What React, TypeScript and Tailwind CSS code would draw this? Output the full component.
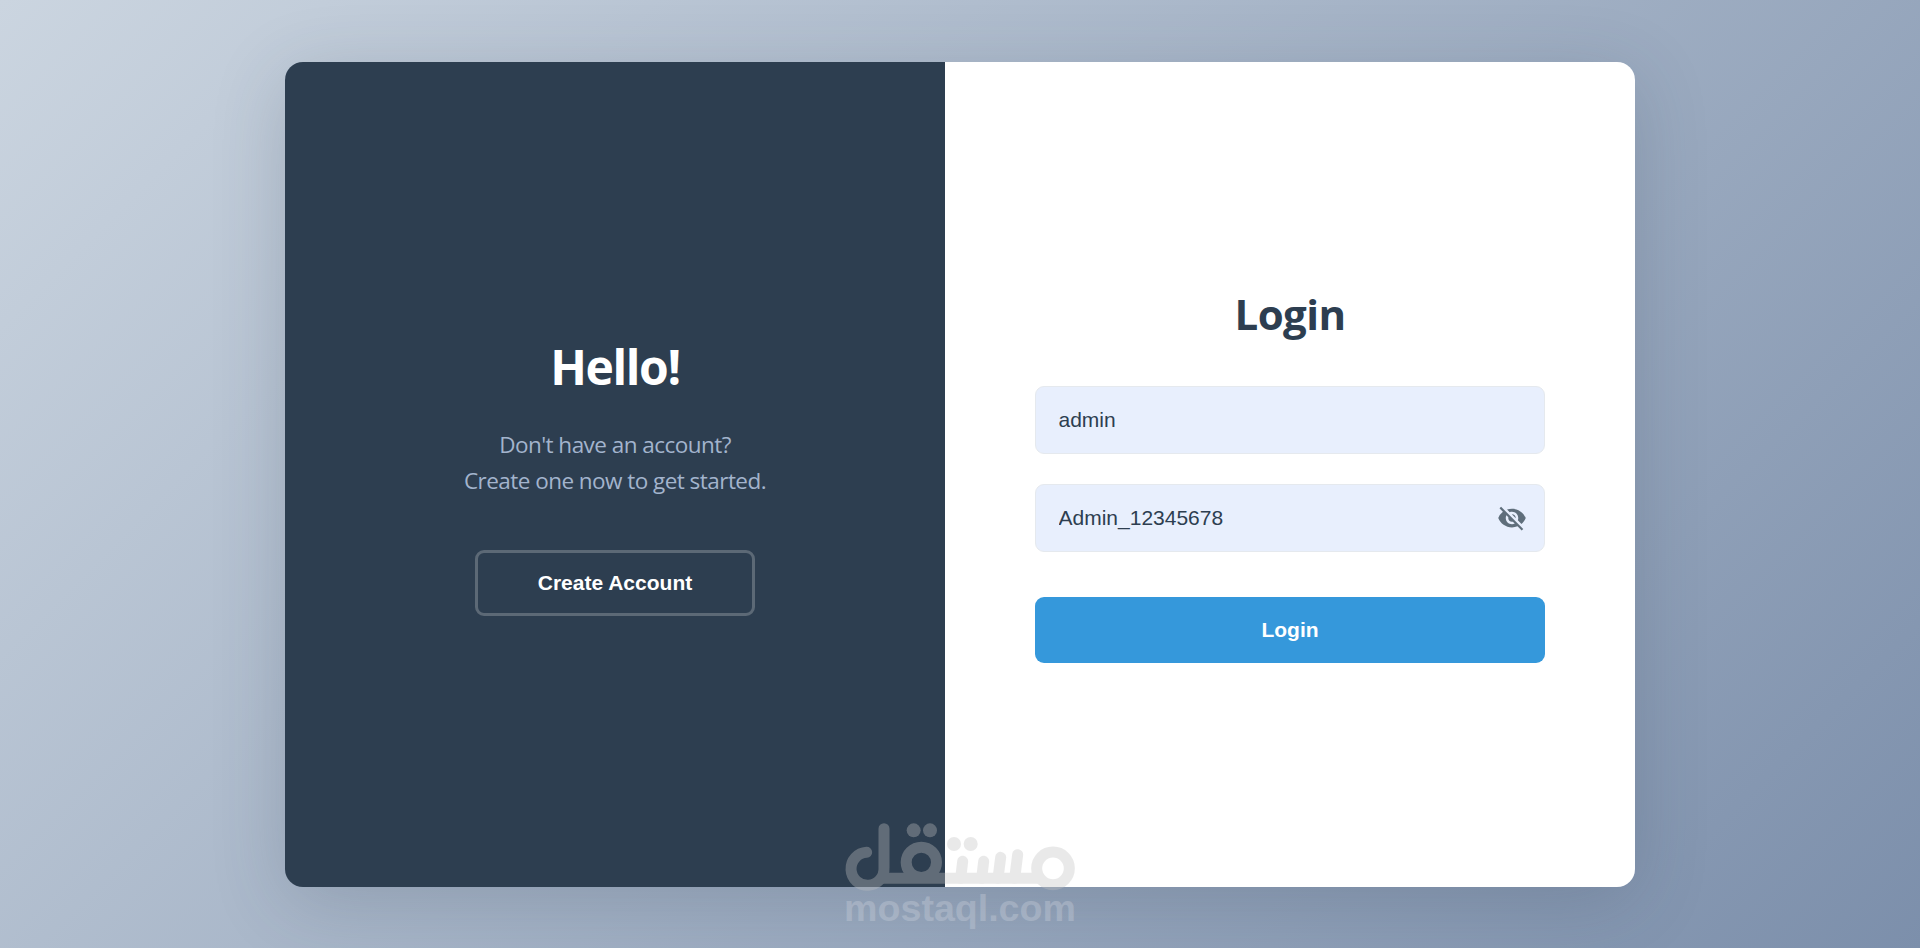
import React, { useState } from "react";
import { MdVisibility, MdVisibilityOff } from "react-icons/md";

function WelcomePanel() {
  return (
    <section className="flex w-[660px] flex-col items-center justify-center bg-[#2d3e50] pt-[3px] text-center">
      <h1 className="font-['Open_Sans',sans-serif] text-[48px] leading-[64px] font-bold tracking-[-1.4px] text-white">
        Hello!
      </h1>
      <p className="mt-7 font-['Open_Sans',sans-serif] text-[22.5px] leading-9 tracking-[-0.54px] text-[#a3b4cd]">
        Don't have an account?
        <br />
        Create one now to get started.
      </p>
      <button
        type="button"
        className="mt-[51px] h-[66px] w-[280px] rounded-[9px] border-[3px] border-[#5c6976] font-['Liberation_Sans',sans-serif] text-[21px] font-bold text-white"
      >
        Create Account
      </button>
    </section>
  );
}

function LoginForm() {
  const [username, setUsername] = useState("admin");
  const [password, setPassword] = useState("Admin_12345678");
  const [visible, setVisible] = useState(true);

  return (
    <form
      className="flex flex-1 flex-col justify-center bg-white px-[90px] font-['Liberation_Sans',sans-serif]"
      onSubmit={(e) => e.preventDefault()}
    >
      <h2 className="text-center font-['Open_Sans',sans-serif] text-[42px] leading-[56px] font-bold tracking-[-0.6px] text-[#2d3e50]">
        Login
      </h2>
      <input
        className="mt-11 h-[68px] rounded-[9px] border border-[#e5e9ee] bg-[#e8effd] px-[22.5px] text-[21px] text-[#2d3e50] outline-none"
        value={username}
        onChange={(e) => setUsername(e.target.value)}
      />
      <div className="relative mt-[30px] flex">
        <input
          type={visible ? "text" : "password"}
          className="h-[68px] w-full rounded-[9px] border border-[#e5e9ee] bg-[#e8effd] px-[22.5px] text-[21px] text-[#2d3e50] outline-none"
          value={password}
          onChange={(e) => setPassword(e.target.value)}
        />
        <button
          type="button"
          className="absolute inset-y-0 right-[18px] flex items-center text-[#5f6e7b]"
          onClick={() => setVisible(!visible)}
        >
          {visible ? <MdVisibilityOff size={30} /> : <MdVisibility size={30} />}
        </button>
      </div>
      <button
        type="submit"
        className="mt-[45px] h-[66px] rounded-[9px] bg-[#3598db] text-[21px] font-bold text-white"
      >
        Login
      </button>
    </form>
  );
}

function Watermark() {
  return (
    <div className="pointer-events-none absolute top-[810px] left-[830px] w-[260px] opacity-35">
      <svg
        className="block h-[82px] w-[260px] text-[#c2c2c2]"
        viewBox="0 0 780 246"
        fill="none"
        stroke="currentColor"
        strokeWidth="33"
        strokeLinecap="round"
      >
        <path d="M110 127A49.5 49.5 0 1 0 162 174V56" />
        <path d="M150 205H632" strokeLinecap="butt" />
        <circle cx="274" cy="157" r="45.5" />
        <circle cx="669" cy="175" r="49" />
        <path d="M398 154L392 205M461 154L455 205M512 142L504 205M563 134L554 205" />
        <g fill="currentColor" stroke="none">
          <circle cx="251" cy="61" r="21" />
          <circle cx="300" cy="61" r="21" />
          <circle cx="372" cy="102" r="21" />
          <circle cx="422" cy="102" r="21" />
        </g>
      </svg>
      <div className="-mt-[3px] text-center font-['Liberation_Sans',sans-serif] text-[37.6px] leading-[38px] font-bold text-[#ccd2dc]">
        mostaql.com
      </div>
    </div>
  );
}

export default function App() {
  return (
    <main className="relative flex h-[948px] w-full items-center justify-center overflow-hidden bg-[linear-gradient(135deg,#cbd5e0_0%,#7c8fab_100%)]">
      <div className="flex h-[825px] w-[1350px] overflow-hidden rounded-[18px] shadow-[0_15px_75px_rgba(45,62,80,0.2)]">
        <WelcomePanel />
        <LoginForm />
      </div>
      <Watermark />
    </main>
  );
}
